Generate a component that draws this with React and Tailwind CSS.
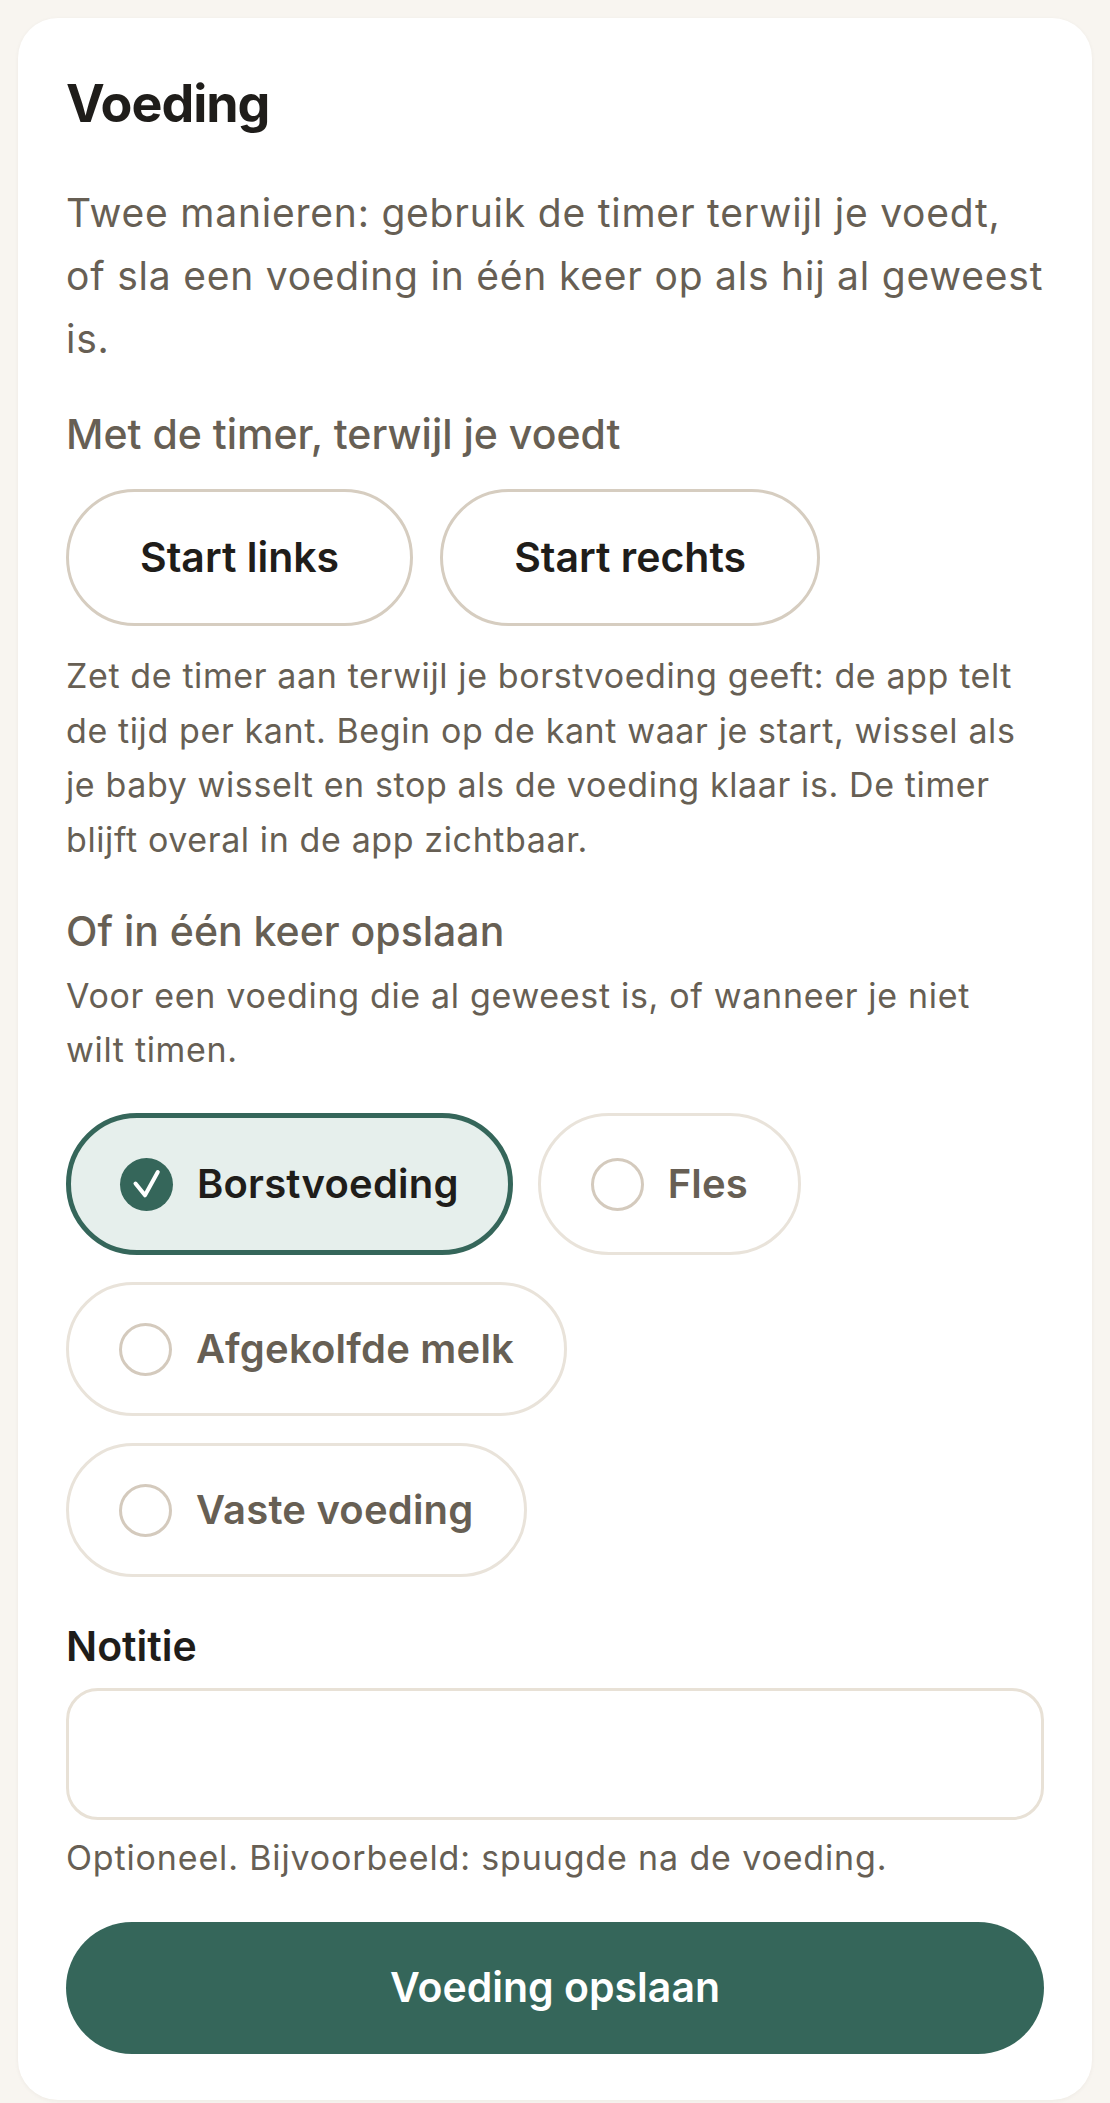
import React, { useState } from 'react';

const FEED_TYPES = [
  { id: 'borst', label: 'Borstvoeding' },
  { id: 'fles', label: 'Fles' },
  { id: 'afgekolfd', label: 'Afgekolfde melk' },
  { id: 'vast', label: 'Vaste voeding' },
];

const INTRO = [
  'Twee manieren: gebruik de timer terwijl je voedt,',
  'of sla een voeding in één keer op als hij al geweest',
  'is.',
];

const TIMER_HELP = [
  'Zet de timer aan terwijl je borstvoeding geeft: de app telt',
  'de tijd per kant. Begin op de kant waar je start, wissel als',
  'je baby wisselt en stop als de voeding klaar is. De timer',
  'blijft overal in de app zichtbaar.',
];

const ONCE_HELP = ['Voor een voeding die al geweest is, of wanneer je niet', 'wilt timen.'];

function Lines({ lines }) {
  return lines.map((line) => (
    <span key={line} className="block whitespace-nowrap">
      {line}
    </span>
  ));
}

function CheckDot({ active }) {
  if (!active) {
    return <span className="h-[53px] w-[53px] shrink-0 rounded-full border-[3px] border-[#d4cabd] bg-white" />;
  }
  return (
    <span className="flex h-[53px] w-[53px] shrink-0 items-center justify-center rounded-full bg-[#35665a]">
      <svg className="h-[53px] w-[53px]" viewBox="0 0 53 53" fill="none" stroke="white" strokeWidth="4" strokeLinecap="round" strokeLinejoin="round">
        <path d="M15.5 25.5L25 37.3L37.8 14" />
      </svg>
    </span>
  );
}

function FeedTypePill({ item, active, onSelect }) {
  return (
    <button
      type="button"
      onClick={() => onSelect(item.id)}
      className={`flex items-center gap-[24px] rounded-full text-[40px] font-semibold tracking-[0.005em] ${
        active
          ? 'min-h-[142px] border-[5px] border-[#35665a] bg-[#e6efec] px-[49px] text-[#1f1d1a]'
          : 'min-h-[134px] border-[3px] border-[#e9e3da] bg-white px-[50px] text-[#675f54]'
      }`}
    >
      <CheckDot active={active} />
      <span>{item.label}</span>
    </button>
  );
}

export default function App() {
  const [feedType, setFeedType] = useState('borst');
  const [note, setNote] = useState('');

  return (
    <div className="min-h-screen bg-[#f8f5f0] p-[18px]" style={{ fontFamily: 'Inter, "Noto Sans", sans-serif' }}>
      <div className="rounded-[40px] bg-white px-[48px] pb-[46px] pt-[54px] shadow-[0_1px_4px_rgba(60,40,20,0.05)]">
        <h1 className="text-[52px] font-bold leading-[64px] tracking-[-0.02em] text-[#1f1d1a]">Voeding</h1>

        <p className="mt-[45px] text-[39px] leading-[63px] tracking-[0.02em] text-[#675f54]">
          <Lines lines={INTRO} />
        </p>

        <h2 className="mt-[39px] text-[41px] font-medium leading-[50px] text-[#675f54]">Met de timer, terwijl je voedt</h2>

        <div className="mt-[30px] flex gap-[27px]">
          <button type="button" className="h-[137px] rounded-full border-[3px] border-[#d6cdc0] bg-white px-[71px] text-[41px] font-semibold text-[#1f1d1a]">
            Start links
          </button>
          <button type="button" className="h-[137px] rounded-full border-[3px] border-[#d6cdc0] bg-white px-[71px] text-[41px] font-semibold text-[#1f1d1a]">
            Start rechts
          </button>
        </div>

        <p className="mt-[23px] text-[34px] leading-[54.5px] tracking-[0.018em] text-[#675f54]">
          <Lines lines={TIMER_HELP} />
        </p>

        <h2 className="mt-[39px] text-[41px] font-medium leading-[50px] text-[#675f54]">Of in één keer opslaan</h2>
        <p className="mt-[13px] text-[34px] leading-[54px] tracking-[0.02em] text-[#675f54]">
          <Lines lines={ONCE_HELP} />
        </p>

        <div className="mt-[36px] flex max-w-[900px] flex-wrap gap-x-[25px] gap-y-[27px]">
          {FEED_TYPES.map((item) => (
            <FeedTypePill key={item.id} item={item} active={feedType === item.id} onSelect={setFeedType} />
          ))}
        </div>

        <label htmlFor="notitie" className="mt-[44px] block text-[41px] font-semibold leading-[50px] text-[#1f1d1a]">
          Notitie
        </label>
        <input
          id="notitie"
          value={note}
          onChange={(e) => setNote(e.target.value)}
          className="mt-[17px] block h-[132px] w-full rounded-[32px] border-[3px] border-[#e8e1d6] bg-white px-[32px] text-[36px] text-[#1f1d1a] outline-none"
        />
        <p className="mt-[11px] text-[34px] leading-[54px] tracking-[0.025em] text-[#675f54]">
          Optioneel. Bijvoorbeeld: spuugde na de voeding.
        </p>

        <button type="button" className="mt-[37px] h-[132px] w-full rounded-full bg-[#35665a] text-[41px] font-semibold text-white">
          Voeding opslaan
        </button>
      </div>
    </div>
  );
}
